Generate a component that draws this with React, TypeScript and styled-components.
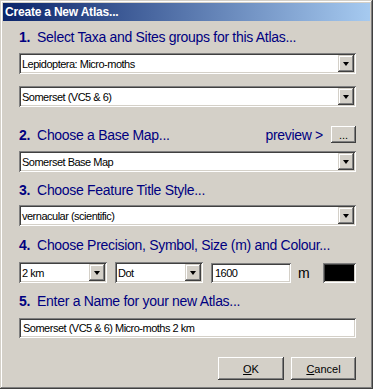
import * as React from "react";
import styled, { createGlobalStyle } from "styled-components";

// Classic Windows colours
const FACE = "#d4d0c8";
const SHADOW = "#808080";
const DARK = "#404040";
const NAVY = "#000080";

const GlobalStyle = createGlobalStyle`
  html, body {
    margin: 0;
    padding: 0;
    background: ${FACE};
  }
`;

const Window = styled.div`
  width: 373px;
  height: 389px;
  box-sizing: border-box;
  padding: 3px;
  background: ${FACE};
  box-shadow: inset -1px -1px ${DARK}, inset 1px 1px ${FACE}, inset -2px -2px ${SHADOW}, inset 2px 2px #fff;
  font-family: "Liberation Sans", Arial, sans-serif;
`;

const TitleBar = styled.div`
  height: 18px;
  display: flex;
  align-items: center;
  padding-left: 2px;
  background: linear-gradient(to right, #0a246a, #a6caf0);
  color: #fff;
  font-weight: bold;
  font-size: 12px;
  letter-spacing: -0.2px;
`;

const Content = styled.div`
  display: flex;
  flex-direction: column;
  padding: 8px 14px 0 16px;
`;

const Heading = styled.div<{ $top: number; $bottom: number }>`
  margin-top: ${(p) => p.$top}px;
  margin-bottom: ${(p) => p.$bottom}px;
  height: 16px;
  line-height: 16px;
  font-size: 14px;
  letter-spacing: -0.3px;
  color: ${NAVY};
  white-space: nowrap;
`;

const Num = styled.b`
  margin-right: 7px;
`;

const HeadRow = styled.div`
  display: flex;
  align-items: center;
  justify-content: space-between;
  margin-top: 19px;
  margin-bottom: 8px;
  height: 17px;
`;

const Preview = styled.div`
  display: flex;
  align-items: center;
  gap: 8px;
  font-size: 14px;
  letter-spacing: -0.3px;
  color: ${NAVY};
`;

const Sunken = styled.div<{ $w?: number; $h?: number }>`
  box-sizing: border-box;
  width: ${(p) => (p.$w ? `${p.$w}px` : "100%")};
  height: ${(p) => p.$h ?? 21}px;
  background: #fff;
  box-shadow: inset 1px 1px ${SHADOW}, inset -1px -1px #fff, inset 2px 2px ${DARK}, inset -2px -2px ${FACE};
  flex: none;
`;

const ComboBox = styled(Sunken)<{ $gap?: number }>`
  display: flex;
  align-items: center;
  padding: 2px;
  margin-bottom: ${(p) => p.$gap ?? 0}px;
  font-size: 11px;
  letter-spacing: -0.5px;
  color: #000;
`;

const ComboText = styled.span`
  flex: 1;
  padding-left: 1px;
  white-space: nowrap;
  overflow: hidden;
`;

const ArrowButton = styled.div`
  width: 16px;
  height: 17px;
  background: ${FACE};
  display: flex;
  align-items: center;
  justify-content: center;
  box-shadow: inset -1px -1px ${DARK}, inset 1px 1px ${FACE}, inset -2px -2px ${SHADOW}, inset 2px 2px #fff;
`;

const Arrow = styled.div`
  width: 0;
  height: 0;
  border-left: 3.5px solid transparent;
  border-right: 3.5px solid transparent;
  border-top: 4px solid #000;
`;

const TextField = styled(Sunken)`
  display: flex;
  align-items: center;
  padding: 2px 4px;
  font-size: 11px;
  letter-spacing: -0.5px;
  color: #000;
  white-space: nowrap;
`;

const Swatch = styled(Sunken)`
  background: #000;
  margin-left: auto;
`;

const OptionsRow = styled.div`
  display: flex;
  align-items: center;
  gap: 8px;
`;

const Unit = styled.span`
  font-size: 14px;
  color: #000;
  margin-left: -1px;
`;

const Button = styled.div<{ $w: number; $h: number }>`
  box-sizing: border-box;
  width: ${(p) => p.$w}px;
  height: ${(p) => p.$h}px;
  display: flex;
  align-items: center;
  justify-content: center;
  background: ${FACE};
  font-size: 11px;
  letter-spacing: 0;
  color: #000;
  box-shadow: inset -1px -1px ${DARK}, inset 1px 1px #fff, inset -2px -2px ${SHADOW}, inset 2px 2px ${FACE};
`;

const Footer = styled.div`
  display: flex;
  justify-content: flex-end;
  gap: 7px;
  margin-top: 19px;
`;

const Combo = ({ value, w, gap }: { value: string; w?: number; gap?: number }) => (
  <ComboBox $w={w} $gap={gap}>
    <ComboText>{value}</ComboText>
    <ArrowButton>
      <Arrow />
    </ArrowButton>
  </ComboBox>
);

export default function App() {
  return (
    <>
      <GlobalStyle />
      <Window>
        <TitleBar>Create a New Atlas...</TitleBar>
        <Content>
          <Heading $top={0} $bottom={8}>
            <Num>1.</Num>Select Taxa and Sites groups for this Atlas...
          </Heading>
          <Combo value="Lepidoptera: Micro-moths" gap={12} />
          <Combo value="Somerset (VC5 & 6)" />

          <HeadRow>
            <Heading $top={0} $bottom={0}>
              <Num>2.</Num>Choose a Base Map...
            </Heading>
            <Preview>
              preview &gt;
              <Button $w={25} $h={17}>...</Button>
            </Preview>
          </HeadRow>
          <Combo value="Somerset Base Map" />

          <Heading $top={10} $bottom={7}>
            <Num>3.</Num>Choose Feature Title Style...
          </Heading>
          <Combo value="vernacular (scientific)" />

          <Heading $top={11} $bottom={9}>
            <Num>4.</Num>Choose Precision, Symbol, Size (m) and Colour...
          </Heading>
          <OptionsRow>
            <Combo value="2 km" w={88} />
            <Combo value="Dot" w={88} />
            <TextField $w={80} $h={20}>1600</TextField>
            <Unit>m</Unit>
            <Swatch $w={33} $h={20} />
          </OptionsRow>

          <Heading $top={10} $bottom={9}>
            <Num>5.</Num>Enter a Name for your new Atlas...
          </Heading>
          <TextField $h={20}>Somerset (VC5 &amp; 6) Micro-moths 2 km</TextField>

          <Footer>
            <Button $w={66} $h={23}>
              <u>O</u>K
            </Button>
            <Button $w={65} $h={23}>
              <u>C</u>ancel
            </Button>
          </Footer>
        </Content>
      </Window>
    </>
  );
}
